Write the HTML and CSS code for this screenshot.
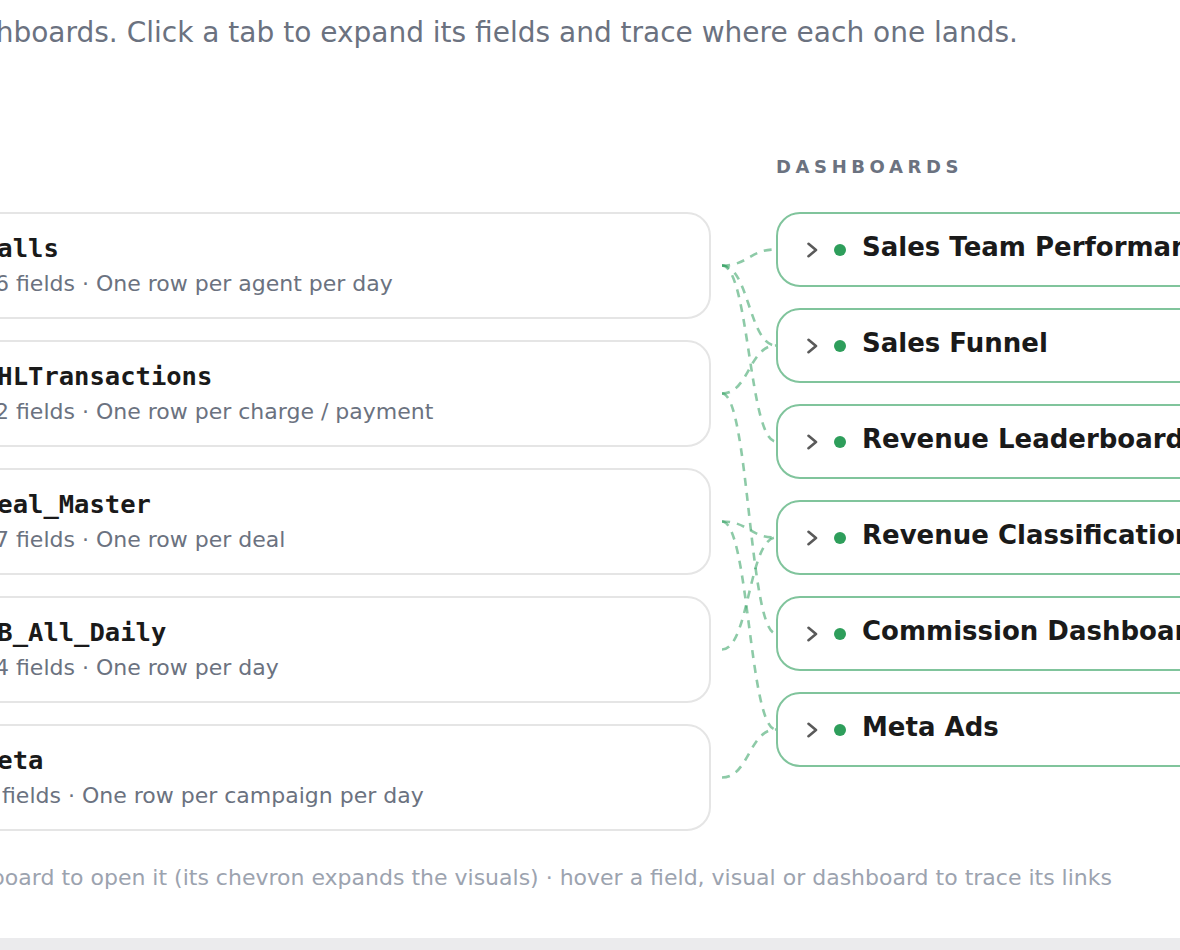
FILE: index.html
```html
<!DOCTYPE html>
<html lang="en">
<head>
<meta charset="utf-8">
<title>Data lineage</title>
<link rel="stylesheet" href="styles.css">
</head>
<body>
<main class="panel">
  <div class="intro"><span>Trace how every data source table feeds the dashboards. Click a tab to expand its fields and trace where each one lands.</span></div>

  <section class="board">
    <div class="col-label">Dashboards</div>

    <div class="sources">
      <div class="source">
        <div class="source-name">Calls</div>
        <div class="source-meta">16 fields · One row per agent per day</div>
      </div>
      <div class="source">
        <div class="source-name">GHLTransactions</div>
        <div class="source-meta">12 fields · One row per charge / payment</div>
      </div>
      <div class="source">
        <div class="source-name">Deal_Master</div>
        <div class="source-meta">17 fields · One row per deal</div>
      </div>
      <div class="source">
        <div class="source-name">FB_All_Daily</div>
        <div class="source-meta">14 fields · One row per day</div>
      </div>
      <div class="source">
        <div class="source-name">Meta</div>
        <div class="source-meta">9 fields · One row per campaign per day</div>
      </div>
    </div>

    <div class="dashboards">
      <div class="dash">
        <svg class="chev" viewBox="0 0 12 16" width="12" height="16"><path d="M2.5 1.8 L10 8 L2.5 14.2"/></svg>
        <span class="dot"></span>
        <span class="dash-name">Sales Team Performance</span>
      </div>
      <div class="dash">
        <svg class="chev" viewBox="0 0 12 16" width="12" height="16"><path d="M2.5 1.8 L10 8 L2.5 14.2"/></svg>
        <span class="dot"></span>
        <span class="dash-name">Sales Funnel</span>
      </div>
      <div class="dash">
        <svg class="chev" viewBox="0 0 12 16" width="12" height="16"><path d="M2.5 1.8 L10 8 L2.5 14.2"/></svg>
        <span class="dot"></span>
        <span class="dash-name">Revenue Leaderboard</span>
      </div>
      <div class="dash">
        <svg class="chev" viewBox="0 0 12 16" width="12" height="16"><path d="M2.5 1.8 L10 8 L2.5 14.2"/></svg>
        <span class="dot"></span>
        <span class="dash-name">Revenue Classification</span>
      </div>
      <div class="dash">
        <svg class="chev" viewBox="0 0 12 16" width="12" height="16"><path d="M2.5 1.8 L10 8 L2.5 14.2"/></svg>
        <span class="dot"></span>
        <span class="dash-name">Commission Dashboard</span>
      </div>
      <div class="dash">
        <svg class="chev" viewBox="0 0 12 16" width="12" height="16"><path d="M2.5 1.8 L10 8 L2.5 14.2"/></svg>
        <span class="dot"></span>
        <span class="dash-name">Meta Ads</span>
      </div>
    </div>

    <svg class="links" width="65" height="676" viewBox="0 0 65 676">
      <path d="M11 110.5 C38 110.5 38 94.5 65 94.5"/>
      <path d="M11 110.5 C38 110.5 38 190.5 65 190.5"/>
      <path d="M11 110.5 C38 110.5 38 286.5 65 286.5"/>
      <path d="M11 238.5 C38 238.5 38 190.5 65 190.5"/>
      <path d="M11 238.5 C38 238.5 38 478.5 65 478.5"/>
      <path d="M11 366.5 C38 366.5 38 382.5 65 382.5"/>
      <path d="M11 366.5 C38 366.5 38 574.5 65 574.5"/>
      <path d="M11 494.5 C38 494.5 38 382.5 65 382.5"/>
      <path d="M11 622.5 C38 622.5 38 574.5 65 574.5"/>
    </svg>
  </section>

  <div class="hint"><span>Click a source tab to list its fields · click a dashboard to open it (its chevron expands the visuals) · hover a field, visual or dashboard to trace its links</span></div>
</main>
</body>
</html>
```

FILE: styles.css
```css
html, body {
  margin: 0;
  padding: 0;
}

body {
  background: #ebebed;
  overflow: hidden;
  font-family: "DejaVu Sans", "Liberation Sans", sans-serif;
  color: #1a1a1a;
}

.panel {
  background: #ffffff;
  margin-left: -64px;
  width: 1400px;
  padding: 13px 0 45px 24px;
  box-shadow: 0 1px 3px rgba(0, 0, 0, 0.06);
}

.intro {
  display: flex;
  justify-content: flex-end;
  width: 1058px;
  font-size: 28px;
  line-height: 39px;
  color: #6b7280;
  white-space: nowrap;
}

.board {
  position: relative;
  display: grid;
  grid-template-columns: 751px 480px;
  column-gap: 65px;
  row-gap: 33px;
  margin-top: 103px;
}

.col-label {
  grid-column: 2;
  grid-row: 1;
  font-size: 18px;
  line-height: 24px;
  font-weight: bold;
  letter-spacing: 4.6px;
  text-transform: uppercase;
  color: #6b7280;
}

.sources {
  grid-column: 1;
  grid-row: 2;
  display: flex;
  flex-direction: column;
  gap: 21px;
}

.source {
  border: 2px solid #e5e5e5;
  border-radius: 24px;
  background: #fff;
  padding: 18px 20px 18px 20px;
}

.source-name {
  font-family: "DejaVu Sans Mono", "Liberation Mono", monospace;
  font-weight: bold;
  font-size: 25.5px;
  line-height: 32px;
  color: #1a1a1a;
}

.source-meta {
  margin-top: 5px;
  margin-left: -1px;
  font-size: 22px;
  line-height: 30px;
  color: #6b7280;
  white-space: nowrap;
}

.dashboards {
  grid-column: 2;
  grid-row: 2;
  display: flex;
  flex-direction: column;
  gap: 21px;
}

.dash {
  display: flex;
  align-items: center;
  gap: 16px;
  height: 75px;
  box-sizing: border-box;
  border: 2px solid #80c49c;
  border-radius: 24px;
  background: #fff;
  padding: 0 28px;
}

.chev {
  flex: none;
  fill: none;
  stroke: #5a5a5a;
  stroke-width: 2.6;
  stroke-linecap: round;
  stroke-linejoin: round;
}

.dot {
  flex: none;
  width: 12px;
  height: 12px;
  border-radius: 50%;
  background: #2e9e5b;
}

.dash-name {
  font-size: 26px;
  line-height: 34px;
  font-weight: bold;
  color: #1a1a1a;
  white-space: nowrap;
  margin-top: -5px;
}

.links {
  position: absolute;
  left: 751px;
  top: 0;
  overflow: visible;
  pointer-events: none;
}

.links path {
  fill: none;
  stroke: #2f9e5e;
  stroke-opacity: 0.55;
  stroke-width: 2.6;
  stroke-dasharray: 8 7;
}

.hint {
  display: flex;
  justify-content: flex-end;
  width: 1152px;
  margin-top: 32px;
  font-size: 22px;
  line-height: 30px;
  color: #9ca3af;
  white-space: nowrap;
}
```
